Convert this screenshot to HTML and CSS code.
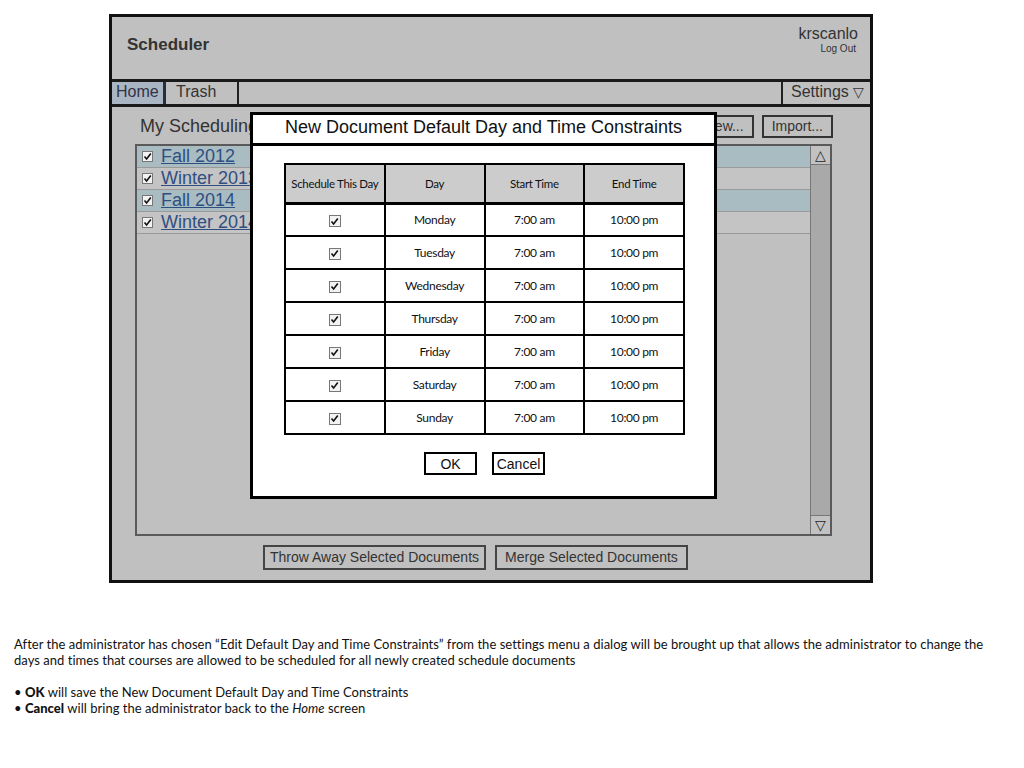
FILE: index.html
```html
<!DOCTYPE html>
<html lang="en">
<head>
<meta charset="utf-8">
<title>Scheduler</title>
<link rel="stylesheet" href="styles.css">
</head>
<body>
<div class="frame">
  <header class="top">
    <div class="brand">Scheduler</div>
    <div class="user">
      <div class="uname">krscanlo</div>
      <div class="logout">Log Out</div>
    </div>
  </header>
  <nav class="nav">
    <div class="tab tab-home">Home</div>
    <div class="tab tab-trash">Trash</div>
    <div class="nav-spacer"></div>
    <div class="tab tab-settings">Settings <span class="tri">&#9661;</span></div>
  </nav>
  <main class="content">
    <div class="toolbar">
      <div class="heading">My Scheduling Documents</div>
      <div class="tool-buttons">
        <button class="gbtn">New...</button>
        <button class="gbtn">Import...</button>
      </div>
    </div>
    <div class="listbox">
      <ul class="rows">
        <li class="row row-alt"><span class="cb"><svg viewBox="0 0 9 9" width="9" height="9"><path d="M1.5 4.5 L3.6 7 L7.8 1.5" fill="none" stroke="#111" stroke-width="1.6"/></svg></span><a class="doc">Fall 2012</a></li>
        <li class="row"><span class="cb"><svg viewBox="0 0 9 9" width="9" height="9"><path d="M1.5 4.5 L3.6 7 L7.8 1.5" fill="none" stroke="#111" stroke-width="1.6"/></svg></span><a class="doc">Winter 2013</a></li>
        <li class="row row-alt"><span class="cb"><svg viewBox="0 0 9 9" width="9" height="9"><path d="M1.5 4.5 L3.6 7 L7.8 1.5" fill="none" stroke="#111" stroke-width="1.6"/></svg></span><a class="doc">Fall 2014</a></li>
        <li class="row"><span class="cb"><svg viewBox="0 0 9 9" width="9" height="9"><path d="M1.5 4.5 L3.6 7 L7.8 1.5" fill="none" stroke="#111" stroke-width="1.6"/></svg></span><a class="doc">Winter 2014</a></li>
      </ul>
      <div class="scrollbar">
        <div class="sb-btn">&#9651;</div>
        <div class="sb-track"></div>
        <div class="sb-btn sb-down">&#9661;</div>
      </div>
    </div>
    <div class="actions">
      <button class="gbtn wide1">Throw Away Selected Documents</button>
      <button class="gbtn wide2">Merge Selected Documents</button>
    </div>
  </main>

  <div class="dialog">
    <div class="dlg-title">New Document Default Day and Time Constraints</div>
    <table class="grid">
      <thead>
        <tr><th>Schedule This Day</th><th>Day</th><th>Start Time</th><th>End Time</th></tr>
      </thead>
      <tbody>
        <tr><td><span class="cb"><svg viewBox="0 0 9 9" width="9" height="9"><path d="M1.5 4.5 L3.6 7 L7.8 1.5" fill="none" stroke="#111" stroke-width="1.6"/></svg></span></td><td>Monday</td><td>7:00 am</td><td>10:00 pm</td></tr>
        <tr><td><span class="cb"><svg viewBox="0 0 9 9" width="9" height="9"><path d="M1.5 4.5 L3.6 7 L7.8 1.5" fill="none" stroke="#111" stroke-width="1.6"/></svg></span></td><td>Tuesday</td><td>7:00 am</td><td>10:00 pm</td></tr>
        <tr><td><span class="cb"><svg viewBox="0 0 9 9" width="9" height="9"><path d="M1.5 4.5 L3.6 7 L7.8 1.5" fill="none" stroke="#111" stroke-width="1.6"/></svg></span></td><td>Wednesday</td><td>7:00 am</td><td>10:00 pm</td></tr>
        <tr><td><span class="cb"><svg viewBox="0 0 9 9" width="9" height="9"><path d="M1.5 4.5 L3.6 7 L7.8 1.5" fill="none" stroke="#111" stroke-width="1.6"/></svg></span></td><td>Thursday</td><td>7:00 am</td><td>10:00 pm</td></tr>
        <tr><td><span class="cb"><svg viewBox="0 0 9 9" width="9" height="9"><path d="M1.5 4.5 L3.6 7 L7.8 1.5" fill="none" stroke="#111" stroke-width="1.6"/></svg></span></td><td>Friday</td><td>7:00 am</td><td>10:00 pm</td></tr>
        <tr><td><span class="cb"><svg viewBox="0 0 9 9" width="9" height="9"><path d="M1.5 4.5 L3.6 7 L7.8 1.5" fill="none" stroke="#111" stroke-width="1.6"/></svg></span></td><td>Saturday</td><td>7:00 am</td><td>10:00 pm</td></tr>
        <tr><td><span class="cb"><svg viewBox="0 0 9 9" width="9" height="9"><path d="M1.5 4.5 L3.6 7 L7.8 1.5" fill="none" stroke="#111" stroke-width="1.6"/></svg></span></td><td>Sunday</td><td>7:00 am</td><td>10:00 pm</td></tr>
      </tbody>
    </table>
    <div class="dlg-buttons">
      <button class="wbtn">OK</button>
      <button class="wbtn">Cancel</button>
    </div>
  </div>
</div>

<section class="notes">
  <p>After the administrator has chosen “Edit Default Day and Time Constraints” from the settings menu a dialog will be brought up that allows the administrator to change the days and times that courses are allowed to be scheduled for all newly created schedule documents</p>
  <ul class="bullets">
    <li>• <b>OK</b> will save the New Document Default Day and Time Constraints</li>
    <li>• <b>Cancel</b> will bring the administrator back to the <i>Home</i> screen</li>
  </ul>
</section>
</body>
</html>
```

FILE: styles.css
```css
* { box-sizing: border-box; }
html, body { margin: 0; padding: 0; background: #fff; }
body { font-family: "Liberation Sans", Arial, sans-serif; color: #222; }

.frame {
  position: relative;
  margin: 14px 0 0 109px;
  width: 764px;
  height: 569px;
  border: 3px solid #111;
  background: #c0c0c0;
}

/* header */
.top {
  height: 62px;
  display: flex;
  justify-content: space-between;
  align-items: flex-start;
  padding: 0 13px 0 15px;
}
.brand {
  font-weight: bold;
  font-size: 17px;
  color: #333;
  line-height: 20px;
  margin-top: 18px;
}
.user { text-align: right; margin-top: 8px; }
.uname { font-size: 16px; line-height: 18px; color: #333; margin-right: -1px; }
.logout { font-size: 10px; line-height: 12px; color: #333; margin-right: 1px; }

/* nav */
.nav {
  display: flex;
  height: 28px;
  border-top: 3px solid #1a1a1a;
  border-bottom: 3px solid #1a1a1a;
  font-size: 16px;
  line-height: 20px;
  color: #333;
}
.tab { height: 22px; }
.tab-home {
  width: 54px;
  padding-left: 4px;
  background: #a9b5c3;
  border-right: 3px solid #25303c;
  color: #334;
}
.tab-trash {
  width: 73px;
  padding-left: 10px;
  border-right: 2px solid #222;
}
.nav-spacer { flex: 1; }
.tab-settings {
  width: 89px;
  padding-left: 8px;
  border-left: 2px solid #222;
}
.tri { font-size: 14px; }

/* content */
.content {
  padding: 8px 38px 0 23px;
  height: 473px;
}
.toolbar {
  display: flex;
  justify-content: space-between;
  align-items: center;
  height: 23px;
}
.heading { font-size: 18px; color: #333; padding-left: 5px; white-space: nowrap; }
.tool-buttons { display: flex; gap: 8px; margin-right: -1px; }
.gbtn {
  font-family: "Liberation Sans", Arial, sans-serif;
  font-size: 14px;
  color: #333;
  background: #c0c0c0;
  border: 2px solid #333;
  height: 23px;
  padding: 0 8px;
  line-height: 19px;
  white-space: nowrap;
}

.listbox {
  margin-top: 6px;
  height: 392px;
  border: 2px solid #5a5a5a;
  display: flex;
}
.rows { list-style: none; margin: 0; padding: 0; flex: 1; }
.row {
  height: 22px;
  border-bottom: 1px solid #9a9a9a;
  display: flex;
  align-items: center;
  padding-left: 5px;
  background: #c4c4c4;
}
.row-alt { background: #a8bcc2; }
.doc {
  margin-left: 8px;
  font-size: 18px;
  line-height: 21px;
  color: #2f4f82;
  text-decoration: underline;
}
.cb {
  display: inline-flex;
  align-items: center;
  justify-content: center;
  width: 11px;
  height: 11px;
  border: 1px solid #777;
  background: #f2f2f2;
  vertical-align: middle;
}
.cb svg { display: block; }

.scrollbar {
  width: 20px;
  border-left: 1px solid #777;
  display: flex;
  flex-direction: column;
}
.sb-btn {
  height: 19px;
  background: #c2c2c2;
  border-bottom: 1px solid #777;
  text-align: center;
  font-size: 14px;
  line-height: 19px;
  color: #222;
}
.sb-down { border-bottom: none; border-top: 1px solid #777; }
.sb-track { flex: 1; background: #a9a9a9; }

.actions {
  display: flex;
  gap: 9px;
  margin-top: 9px;
  padding-left: 128px;
}
.actions .gbtn { height: 25px; border-color: #444; padding: 0; }
.wide1 { width: 223px; }
.wide2 { width: 193px; }

/* dialog */
.dialog {
  position: absolute;
  left: 138px;
  top: 95px;
  width: 467px;
  height: 387px;
  background: #fff;
  border: 3px solid #000;
}
.dlg-title {
  height: 31px;
  border-bottom: 3px solid #000;
  text-align: center;
  font-size: 18px;
  line-height: 25px;
  color: #111;
}
.grid {
  margin: 17px 0 0 31px;
  border-collapse: collapse;
  width: 401px;
  font-family: Lato, "Noto Sans", sans-serif;
  color: #111;
  table-layout: fixed;
}
.grid th, .grid td {
  border: 2px solid #000;
  text-align: center;
  padding: 0;
}
.grid th {
  background: #cccccc;
  font-weight: normal;
  font-size: 11.5px;
  letter-spacing: -0.3px;
  height: 39px;
  border-bottom-width: 3px;
}
.grid td {
  font-size: 12px;
  letter-spacing: -0.3px;
  height: 33px;
}
.grid td .cb { width: 12px; height: 12px; }

.dlg-buttons {
  display: flex;
  justify-content: center;
  gap: 15px;
  margin-top: 17px;
  padding-left: 2px;
}
.wbtn {
  width: 53px;
  height: 23px;
  background: #fff;
  border: 2px solid #000;
  font-family: "Liberation Sans", Arial, sans-serif;
  font-size: 14px;
  color: #111;
  padding: 0;
}

/* notes */
.notes {
  margin-top: 53px;
  padding-left: 14px;
  width: 996px;
  font-family: Lato, "Noto Sans", sans-serif;
  font-size: 13px;
  line-height: 16px;
  color: #111;
  letter-spacing: 0.03px;
}
.notes p { margin: 0 0 16px 0; }
.notes b { font-weight: 900; }
.bullets { list-style: none; margin: 0; padding: 0; }
```
